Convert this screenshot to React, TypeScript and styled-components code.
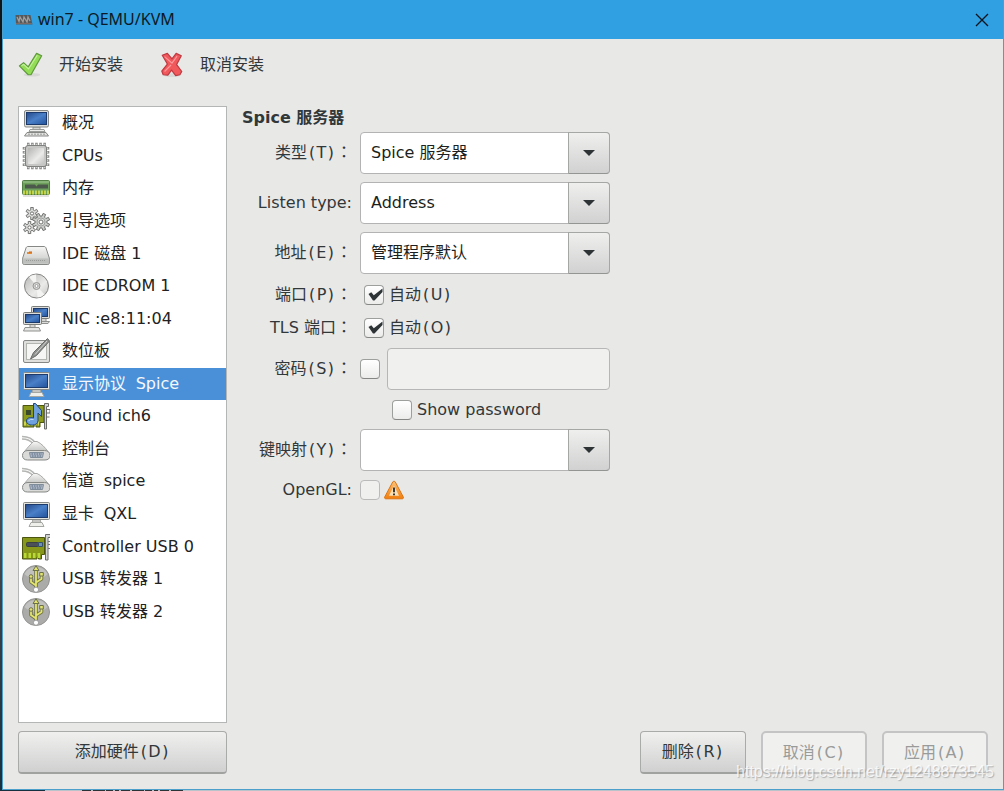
import React from 'react';
import styled, { createGlobalStyle } from 'styled-components';

const GlobalStyle = createGlobalStyle`
  *, *::before, *::after { box-sizing: border-box; }
  body {
    margin: 0;
    background: #17303f;
    color: #323739;
    font: 16px/20px "DejaVu Sans", "Noto Sans CJK SC", sans-serif;
  }
  button, input, select { font: inherit; color: inherit; }
`;

/* ---------- window frame ---------- */

const Desktop = styled.div`
  display: flex;
  flex-direction: column;
  min-height: 100vh;
  padding-left: 2px;
  background: linear-gradient(#10151a 0, #10151a 12%, #1d3c50 45%, #4c4a4c 66%, #17303f 100%);
`;

const Window = styled.main`
  position: relative;
  flex: 1;
  display: flex;
  flex-direction: column;
  border: solid #4a9fcb;
  border-width: 0 1px 1px 1px;
  background: #e8e8e7;
`;

const Behind = styled.svg`
  display: block;
  width: 100%;
  height: 1px;
`;

const TitleBar = styled.header`
  display: flex;
  align-items: center;
  gap: 5px;
  height: 39px;
  padding: 0 14px 0 11px;
  background: #31a0e2;
  color: #0b1a26;
`;

const Title = styled.h1`
  flex: 1;
  margin: 0;
  padding-bottom: 2px;
  font: 400 16px/20px "Noto Sans", "Noto Sans CJK SC", sans-serif;
`;

const CloseButton = styled.button`
  display: flex;
  padding: 0;
  border: 0;
  background: none;
`;

const Toolbar = styled.div`
  display: flex;
  gap: 36px;
  height: 67px;
  padding: 12px 15px 0;
`;

const ToolButton = styled.button`
  display: flex;
  align-items: center;
  gap: 15px;
  height: 28px;
  padding: 0;
  border: 0;
  background: none;
`;

const Body = styled.div`
  flex: 1;
  display: flex;
  gap: 15px;
  padding: 0 15px;
`;

/* ---------- hardware list ---------- */

const Sidebar = styled.nav`
  width: 209px;
  border: 1px solid #b4b6b5;
  background: #fff;
`;

const HardwareList = styled.ul`
  display: grid;
  grid-template-rows: repeat(16, 1fr);
  height: 521px;
  margin: 0;
  padding: 0;
  list-style: none;
`;

const HardwareItem = styled.li<{ $selected?: boolean }>`
  display: flex;
  align-items: center;
  gap: 12px;
  padding-left: 3px;
  background: ${(p) => (p.$selected ? '#4a90d9' : 'transparent')};
  color: ${(p) => (p.$selected ? '#f4f8fc' : '#222')};
  white-space: nowrap;
`;

/* ---------- details form ---------- */

const Details = styled.section`
  flex: 1;
`;

const Heading = styled.h2`
  margin: 0 0 4px;
  padding-top: 1px;
  font: 700 16px/21px "DejaVu Sans", "Noto Sans CJK SC", sans-serif;
`;

const Form = styled.form`
  display: grid;
  grid-template-columns: 110px 250px;
  gap: 8px;
`;

const FieldLabel = styled.label`
  align-self: center;
  text-align: right;
  white-space: nowrap;
`;

const SelectBox = styled.div`
  position: relative;
  height: 42px;
`;

const Select = styled.select`
  appearance: none;
  width: 100%;
  height: 100%;
  padding: 0 48px 0 10px;
  border: 1px solid #b2b3b2;
  border-radius: 4px;
  background: #fff;
  color: #1c1f20;
`;

const Arrow = styled.span`
  position: absolute;
  top: 0;
  right: 0;
  bottom: 0;
  display: grid;
  place-items: center;
  width: 42px;
  border: 1px solid #a5a7a5;
  border-bottom-color: #939593;
  border-radius: 0 4px 4px 0;
  background: linear-gradient(#efefee, #d0d1d0);
  pointer-events: none;
`;

const CheckRow = styled.div<{ $height: number; $indent?: number; $gap?: number }>`
  grid-column: 2;
  display: flex;
  align-items: center;
  gap: ${(p) => p.$gap ?? 5}px;
  height: ${(p) => p.$height}px;
  padding-left: ${(p) => p.$indent ?? 0}px;
`;

const CheckCell = styled.span`
  display: grid;
  width: 20px;
  height: 20px;

  & > * { grid-area: 1 / 1; }
  & > svg { visibility: hidden; pointer-events: none; }
  & > input:checked + svg { visibility: visible; }
`;

const CheckInput = styled.input`
  appearance: none;
  width: 20px;
  height: 20px;
  margin: 0;
  border: 1px solid #9d9f9d;
  border-bottom-color: #858785;
  border-radius: 4px;
  background: linear-gradient(#fff, #ececeb);

  &:disabled {
    border-color: #b9bab9;
    background: #f0f0ef;
  }
`;

const Password = styled.input`
  width: 223px;
  height: 42px;
  padding: 0 10px;
  border: 1px solid #b5b6b5;
  border-radius: 4px;
  background: #f0f0ef;
`;

/* ---------- footer ---------- */

const Footer = styled.footer`
  display: flex;
  gap: 15px;
  padding: 8px 15px 15px;
`;

const Button = styled.button<{ $width: number }>`
  width: ${(p) => p.$width}px;
  height: 43px;
  padding: 0;
  border: 1px solid #a9aba9;
  border-bottom: 2px solid #a0a2a0;
  border-radius: 4px;
  background: linear-gradient(#f0f0ef, #cfd0cf);

  &:disabled {
    border: 2px solid #c3c4c3;
    border-radius: 5px;
    background: #f0f0ef;
    color: #999b9a;
  }
`;

const Spacer = styled.span`
  flex: 1;
`;

const Watermark = styled.span`
  position: absolute;
  right: 9px;
  bottom: 7px;
  color: rgba(255, 255, 255, 0.8);
  font: 16px/20px "Liberation Sans", Arial, sans-serif;
  text-shadow: 1px 1px 1px rgba(120, 120, 120, 0.5);
  pointer-events: none;
`;

/* ---------- text ---------- */

const Fixed = styled.span`
  font-family: "DejaVu Sans Mono", monospace;
  line-height: 1;
  white-space: pre;
`;

const WideColon = styled.span`
  font-family: "Noto Sans CJK TC", sans-serif;
  line-height: 1;
`;

/* Brackets, and the space between Han characters and a word, are set fixed-width. */
function Mixed({ text }: { text: string }) {
  const parts = text.split(/([()：]|(?<=[\u4e00-\u9fff]) (?=[A-Za-z]))/);
  return (
    <span>
      {parts.map((part, i) => {
        if (i % 2 === 0) return part;
        return part === '：' ? <WideColon key={i}>{part}</WideColon> : <Fixed key={i}>{part}</Fixed>;
      })}
    </span>
  );
}

/* ---------- icons ---------- */

function Icon({ children, size = 28 }: { children: React.ReactNode; size?: number }) {
  return (
    <svg width={size} height={size} viewBox="0 0 28 28" aria-hidden="true">
      {children}
    </svg>
  );
}

const IconDefs = () => (
  <svg width="0" height="0" aria-hidden="true">
    <defs>
      <linearGradient id="screen" x1="0" y1="0" x2="1" y2="1">
        <stop offset="0" stopColor="#24498a" />
        <stop offset="0.5" stopColor="#4a80c8" />
        <stop offset="1" stopColor="#22529c" />
      </linearGradient>
      <linearGradient id="metal" x1="0" y1="0" x2="1" y2="1">
        <stop offset="0" stopColor="#b4b5b3" />
        <stop offset="0.6" stopColor="#ebebea" />
        <stop offset="1" stopColor="#c2c3c1" />
      </linearGradient>
      <linearGradient id="shell" x1="0" y1="0" x2="0" y2="1">
        <stop offset="0" stopColor="#f7f7f6" />
        <stop offset="1" stopColor="#c3c5c2" />
      </linearGradient>
      <linearGradient id="amber" x1="0" y1="0" x2="0" y2="1">
        <stop offset="0" stopColor="#fcc27a" />
        <stop offset="1" stopColor="#f17d0c" />
      </linearGradient>
    </defs>
  </svg>
);

const ComputerIcon = () => (
  <Icon>
    <path d="M11 18h7v4h-7z" fill="#d4d5d2" stroke="#9a9c99" />
    <rect x="2.500" y="1.500" width="24" height="16.500" rx="1.500" fill="#dcddda" stroke="#868885" />
    <rect x="4.500" y="3.500" width="20" height="12" fill="url(#screen)" stroke="#1d3a6c" />
    <path d="M8 20.500h14l1 2H7z" fill="#eeefec" stroke="#9a9c99" />
    <path d="M5 23.500l-2.500 3.500h24l-2.500-3.500z" fill="#e3e4e1" stroke="#868885" />
    <path d="M6 25.200h17" stroke="#9a9c99" strokeDasharray="2 1" />
  </Icon>
);

const CpuIcon = () => (
  <Icon>
    <g stroke="#7f817e" strokeWidth="3.500">
      <path d="M5 2.500h19M5 25.500h19" strokeDasharray="2.500 1.600" />
      <path d="M2.500 5v19M25.500 5v19" strokeDasharray="2.500 1.600" />
    </g>
    <g stroke="#cfd0ce" strokeWidth="1.500">
      <path d="M5.500 2.500h19M5.500 25.500h19" strokeDasharray="1.500 2.600" />
      <path d="M2.500 5.500v19M25.500 5.500v19" strokeDasharray="1.500 2.600" />
    </g>
    <rect x="3.500" y="3.500" width="21" height="21" rx="2.500" fill="#c6c7c5" stroke="#7f817e" />
    <rect x="6" y="6" width="16" height="16" rx="1" fill="url(#metal)" />
  </Icon>
);

const MemoryIcon = () => (
  <Icon>
    <rect x="0.500" y="6.500" width="27" height="14" rx="1" fill="#6da05a" stroke="#527d45" />
    <path d="M1 8h26" stroke="#a3c596" />
    <path d="M3 10.500h10l1.500 2 1.500-2h10v4H3z" fill="#4d584d" />
    <path d="M1 18.500h26" stroke="#c3d34c" strokeWidth="4" strokeDasharray="2 1" />
    <path d="M1 22h26" stroke="#c3c5c1" />
  </Icon>
);

/* Outline of a gear with square-cut teeth. */
function gearPath(cx: number, cy: number, inner: number, outer: number, teeth: number) {
  const step = (Math.PI * 2) / teeth;
  const at = (r: number, a: number) =>
    `${(cx + r * Math.cos(a)).toFixed(2)} ${(cy + r * Math.sin(a)).toFixed(2)}`;
  const points: string[] = [];
  for (let i = 0; i < teeth; i += 1) {
    const a = i * step + step / 2;
    points.push(at(inner, a - step * 0.3), at(outer, a - step * 0.2));
    points.push(at(outer, a + step * 0.2), at(inner, a + step * 0.3));
  }
  return `M${points.join('L')}Z`;
}

const GearsIcon = () => (
  <Icon>
    <g fill="#dfe0de" stroke="#6f716e" strokeLinejoin="round">
      <path d={gearPath(10, 6.5, 3.8, 6.2, 6)} />
      <path d={gearPath(7.5, 20.5, 3.8, 6.2, 6)} />
      <path d={gearPath(19, 15, 6, 8.8, 8)} fill="#c9cbc8" />
      <circle cx="10" cy="6.500" r="1.600" fill="#fff" />
      <circle cx="7.500" cy="20.500" r="1.600" fill="#fff" />
      <circle cx="19" cy="15" r="4" fill="#dfe0de" stroke="#a1a3a0" />
      <circle cx="19" cy="15" r="2" fill="#fff" />
    </g>
  </Icon>
);

const DiskIcon = () => (
  <Icon>
    <path d="M6 6.500h16c1 0 1.600.5 2 1.500l3.300 10v5c0 1-.5 1.500-1.500 1.500H2.200c-1 0-1.500-.5-1.500-1.500v-5L4 8c.4-1 1-1.500 2-1.500z" fill="url(#shell)" stroke="#868885" />
    <path d="M1.500 18.500h25v4.500h-25z" fill="#bdbfbc" />
    <path d="M4 20.500h20" stroke="#9a9c99" strokeDasharray="1 1" />
    <path d="M5 13h5" stroke="#e58a35" strokeWidth="2" />
    <path d="M7 12h3" stroke="#c75f17" />
  </Icon>
);

const DiscIcon = () => (
  <Icon>
    <circle cx="14.500" cy="14" r="12" fill="url(#metal)" stroke="#858684" />
    <path d="M14.500 14L7 5a12 12 0 0 1 7-2.500zM14.500 14l8 8.500a12 12 0 0 1-7 3z" fill="#f4f4f3" />
    <circle cx="14.500" cy="14" r="3.500" fill="#d6d7d5" stroke="#959694" />
    <circle cx="14.500" cy="14" r="1.500" fill="#fff" stroke="#a0a1a0" />
  </Icon>
);

const NetworkIcon = () => (
  <Icon>
    <path d="M19 12h5v5h-5z" fill="#d4d5d2" stroke="#8f918e" />
    <rect x="9.500" y="1.500" width="18" height="12" rx="1" fill="#dcddda" stroke="#7b7d7a" />
    <rect x="11.500" y="3.500" width="14" height="8" fill="url(#screen)" stroke="#1d3a6c" />
    <path d="M15 18.500h11l1.500-2h-12z" fill="#dcddda" stroke="#8f918e" />
    <path d="M8 19h5v4H8z" fill="#d4d5d2" stroke="#8f918e" />
    <rect x="1.500" y="7.500" width="18" height="12" rx="1" fill="#dcddda" stroke="#7b7d7a" />
    <rect x="3.500" y="9.500" width="14" height="8" fill="url(#screen)" stroke="#1d3a6c" />
    <path d="M3 22.500l-1.500 3.500h17L17 22.500z" fill="#e6e7e4" stroke="#8f918e" />
  </Icon>
);

const TabletIcon = () => (
  <Icon>
    <rect x="1.500" y="3.500" width="26" height="22" rx="1.500" fill="#dfe0dd" stroke="#868885" />
    <rect x="4.500" y="6.500" width="20" height="16" fill="#f6f6f4" stroke="#b3b5b1" />
    <path d="M25.500 1.500L27.500 4 14.500 18.500 8.500 22l3-6.500z" fill="#8d8f8c" stroke="#6a6c69" strokeLinejoin="round" />
    <path d="M25 4L13 17.500" stroke="#d3d4d2" />
  </Icon>
);

const MonitorIcon = () => (
  <Icon>
    <path d="M11 18h7l1 6H10z" fill="#c5c6c3" stroke="#a5a7a2" />
    <rect x="1.500" y="2.500" width="26" height="17" rx="1" fill="#e3e4e0" stroke="#868885" />
    <rect x="3.500" y="4.500" width="22" height="13" fill="url(#screen)" stroke="#1d3a6c" />
    <path d="M9 22.500h11l2 4H7z" fill="#eeefea" stroke="#a5a7a2" />
  </Icon>
);

const SoundIcon = () => (
  <Icon>
    <path d="M1 3.500h21v17H18V25h-4v-2h-2v2H1z" fill="#8b9a1c" stroke="#4b5510" />
    <path d="M2 21.500h15" stroke="#d0d34e" strokeWidth="4" strokeDasharray="2 1.500" />
    <rect x="4" y="8" width="5" height="5" fill="#3b4a2a" />
    <path d="M11.500 16V1.500h2l6 7v6l-3.500-3.500v7.500c0 3-2.500 4.500-5.500 4.500s-6-1-6-4 3-4 7-3z" fill="#6ea1de" stroke="#1f467f" />
    <path d="M6.500 19c1-1.500 3-2 5-1.500" fill="none" stroke="#c9def5" />
    <path d="M22.500 1.500h4v3h-2V27h-2z" fill="#d2d4d1" stroke="#6a6c69" />
    <path d="M25 7.500h3v3.500h-3M25 15h2.500" fill="none" stroke="#777" />
  </Icon>
);

const SerialIcon = () => (
  <Icon>
    <path d="M0 1.500c7 0 11 2.500 13 6.500M0 4c6 0 9 2 11 5" fill="none" stroke="#b4b6b3" strokeWidth="1.500" />
    <path d="M11.500 6.500h3.500c4.500 2 8 6 11 10H2.500c3-4 6-7 9-10z" fill="url(#shell)" stroke="#a9aba8" />
    <path d="M6 15.500h16.500c3.500 0 5.500 2 5.500 5s-2 4.500-5 4.500H5.500c-3 0-5-1.500-5-4.500s2-5 5.500-5z" fill="#dadbd8" stroke="#868885" />
    <path d="M7.500 17.500h14l-1 5H8.500z" fill="#a9b5c2" stroke="#7f8c9a" />
    <path d="M9.500 19h10.500M10 21h9" stroke="#5a6d84" strokeDasharray="1.500 1" />
  </Icon>
);

const CardIcon = () => (
  <Icon>
    <path d="M0.500 4.500h22v17h-3V26h-3v-2H15v2H0.500z" fill="#87971a" stroke="#4b5510" />
    <path d="M2 22.500h16" stroke="#b9d936" strokeWidth="5" strokeDasharray="2.500 2" />
    <rect x="4.500" y="9.500" width="12" height="4" rx="1" fill="#4b5156" stroke="#3a4044" />
    <path d="M16.500 9.500h4v4h-4z" fill="#6d8fb3" stroke="#35506e" />
    <path d="M23.500 1.500h5v3h-2.500V27h-2.500z" fill="#d2d4d1" stroke="#6a6c69" />
    <path d="M26 8.500h2.500v3H26M26 15.500h2.500" fill="none" stroke="#777" />
  </Icon>
);

const UsbIcon = () => (
  <Icon>
    <circle cx="14" cy="14" r="13.500" fill="#abacaa" stroke="#939492" />
    <path d="M2.500 9a13 13 0 0 1 23 0c-4 5-15 8-23 0z" fill="#c1c2c0" />
    <g fill="none" stroke="#6d7148" strokeWidth="3.500" strokeLinejoin="round">
      <path d="M14 24V5M14 20.500L9 17v-5M14 17.500l5.500-3.500v-4" />
    </g>
    <g fill="none" stroke="#e3e570" strokeWidth="1.800" strokeLinejoin="round">
      <path d="M14 24V5M14 20.500L9 17v-5M14 17.500l5.500-3.500v-4" />
    </g>
    <path d="M14 0.800l3 4.700h-6z" fill="#e3e570" stroke="#6d7148" />
    <circle cx="9" cy="11.500" r="1.800" fill="#e3e570" stroke="#6d7148" />
    <path d="M17.700 7.500h3.600V11h-3.600z" fill="#e3e570" stroke="#6d7148" />
    <circle cx="14" cy="24.700" r="2.600" fill="#fff" stroke="#999" />
  </Icon>
);

const ApplyIcon = () => (
  <Icon size={26}>
    <ellipse cx="15" cy="24.500" rx="9" ry="2" fill="#d8d9d7" />
    <path d="M1.500 15l4.500-3.500 5 4.500L20 1.500 25.500 4 14 24.500h-3z" fill="#92dd55" stroke="#5f9a3c" strokeWidth="1.300" strokeLinejoin="round" />
    <path d="M3.800 15l2.200-1.700 5.300 5L20.800 3.500" fill="none" stroke="#c6f09f" strokeWidth="1.200" />
  </Icon>
);

const CancelIcon = () => (
  <Icon size={26}>
    <ellipse cx="14" cy="25" rx="9" ry="2" fill="#d8d9d7" />
    <path d="M3.500 3.500l5.500-2 5 6L18.500 1.500l5.500 2.500-5 9.500 5.500 7.500-2 3.500-4.500 1-4.500-6-4 5.500-5-.5-1.500-4 6-7.500z" fill="#f0585c" stroke="#bf3940" strokeWidth="1.300" strokeLinejoin="round" />
    <path d="M6 5l8 7L19.500 4.500M6 21l7-7" fill="none" stroke="#ff9a9c" strokeWidth="1.200" />
  </Icon>
);

const AppIcon = () => (
  <svg width="19" height="12" viewBox="0 0 19 12" aria-hidden="true">
    <path d="M1.500 1h15l2 9.500H2z" fill="#55595b" />
    <path d="M3 3l2 4.500 1-4.500 3 5 1-5 3 5 1-5 2 4" fill="none" stroke="#a19f9d" strokeWidth="1.300" />
    <path d="M2 9.500h16" stroke="#7d6a64" />
  </svg>
);

const WarningIcon = () => (
  <svg width="22" height="20" viewBox="0 0 22 20" role="img" aria-label="警告">
    <path d="M11 1.200c.6 0 1 .3 1.300.8l8 15c.5 1-.1 1.800-1.200 1.800H2.900c-1.100 0-1.700-.8-1.200-1.800l8-15c.3-.5.7-.8 1.300-.8z" fill="url(#amber)" stroke="#dc7410" />
    <path d="M11 5.500l5 10.300H6z" fill="#f9dfb8" />
    <path d="M11 7.500v4.800M11 13.500v1.800" stroke="#3b3a36" strokeWidth="2" />
  </svg>
);

/* ---------- controls ---------- */

function Combo({ id, label, value }: { id: string; label: string; value: string }) {
  return (
    <>
      <FieldLabel htmlFor={id}><Mixed text={label} /></FieldLabel>
      <SelectBox>
        <Select id={id} defaultValue={value}>
          <option value={value}>{value}</option>
        </Select>
        <Arrow>
          <svg width="12" height="6" viewBox="0 0 12 6" aria-hidden="true">
            <path d="M0 0h12L6 6z" fill="#2e3436" />
          </svg>
        </Arrow>
      </SelectBox>
    </>
  );
}

function Check(props: React.InputHTMLAttributes<HTMLInputElement>) {
  return (
    <CheckCell>
      <CheckInput type="checkbox" {...props} />
      <svg width="20" height="20" viewBox="0 0 20 20" aria-hidden="true">
        <path d="M4.500 9l2.800-1.800 2.500 3L18.500 3.500V7l-8 8.500H9z" fill="#2e3436" />
      </svg>
    </CheckCell>
  );
}

const hardware: { label: string; icon: React.ComponentType; selected?: boolean }[] = [
  { label: '概况', icon: ComputerIcon },
  { label: 'CPUs', icon: CpuIcon },
  { label: '内存', icon: MemoryIcon },
  { label: '引导选项', icon: GearsIcon },
  { label: 'IDE 磁盘 1', icon: DiskIcon },
  { label: 'IDE CDROM 1', icon: DiscIcon },
  { label: 'NIC :e8:11:04', icon: NetworkIcon },
  { label: '数位板', icon: TabletIcon },
  { label: '显示协议 Spice', icon: MonitorIcon, selected: true },
  { label: 'Sound ich6', icon: SoundIcon },
  { label: '控制台', icon: SerialIcon },
  { label: '信道 spice', icon: SerialIcon },
  { label: '显卡 QXL', icon: MonitorIcon },
  { label: 'Controller USB 0', icon: CardIcon },
  { label: 'USB 转发器 1', icon: UsbIcon },
  { label: 'USB 转发器 2', icon: UsbIcon },
];

export default function App() {
  return (
    <Desktop>
      <GlobalStyle />
      <IconDefs />
      <Window>
        <TitleBar>
          <AppIcon />
          <Title>win7 - QEMU/KVM</Title>
          <CloseButton type="button" aria-label="关闭">
            <svg width="14" height="14" viewBox="0 0 14 14" aria-hidden="true">
              <path d="M1 1l12 12M13 1L1 13" stroke="#08121a" strokeWidth="1.300" />
            </svg>
          </CloseButton>
        </TitleBar>

        <Toolbar>
          <ToolButton type="button"><ApplyIcon />开始安装</ToolButton>
          <ToolButton type="button"><CancelIcon />取消安装</ToolButton>
        </Toolbar>

        <Body>
          <Sidebar>
            <HardwareList>
              {hardware.map(({ label, icon: ItemIcon, selected }) => (
                <HardwareItem key={label} $selected={selected}>
                  <ItemIcon />
                  <Mixed text={label} />
                </HardwareItem>
              ))}
            </HardwareList>
          </Sidebar>

          <Details>
            <Heading>Spice 服务器</Heading>
            <Form>
              <Combo id="type" label="类型(T)：" value="Spice 服务器" />
              <Combo id="listen" label="Listen type:" value="Address" />
              <Combo id="address" label="地址(E)：" value="管理程序默认" />

              <FieldLabel htmlFor="port"><Mixed text="端口(P)：" /></FieldLabel>
              <CheckRow $height={25} $indent={4}>
                <Check id="port" defaultChecked />
                <label htmlFor="port"><Mixed text="自动(U)" /></label>
              </CheckRow>

              <FieldLabel htmlFor="tls"><Mixed text="TLS 端口：" /></FieldLabel>
              <CheckRow $height={25} $indent={4}>
                <Check id="tls" defaultChecked />
                <label htmlFor="tls"><Mixed text="自动(O)" /></label>
              </CheckRow>

              <FieldLabel htmlFor="use-password"><Mixed text="密码(S)：" /></FieldLabel>
              <CheckRow $height={42} $gap={7}>
                <Check id="use-password" />
                <Password type="password" disabled aria-label="密码" />
              </CheckRow>

              <CheckRow $height={23} $indent={32}>
                <Check id="show-password" />
                <label htmlFor="show-password">Show password</label>
              </CheckRow>

              <Combo id="keymap" label="键映射(Y)：" value="" />

              <FieldLabel htmlFor="opengl">OpenGL:</FieldLabel>
              <CheckRow $height={22} $gap={3}>
                <Check id="opengl" disabled />
                <WarningIcon />
              </CheckRow>
            </Form>
          </Details>
        </Body>

        <Footer>
          <Button type="button" $width={209}><Mixed text="添加硬件(D)" /></Button>
          <Spacer />
          <Button type="button" $width={106}><Mixed text="删除(R)" /></Button>
          <Button type="button" $width={106} disabled><Mixed text="取消(C)" /></Button>
          <Button type="button" $width={106} disabled><Mixed text="应用(A)" /></Button>
        </Footer>
        <Watermark>https://blog.csdn.net/rzy1248873545</Watermark>
      </Window>
      <Behind aria-hidden="true">
        <path d="M43 0h2000v1H43z" fill="#b9c3c9" />
        <path d="M80 0.500h102" stroke="#2c3336" strokeDasharray="9 2 12 1 7 2 4 2" />
      </Behind>
    </Desktop>
  );
}
